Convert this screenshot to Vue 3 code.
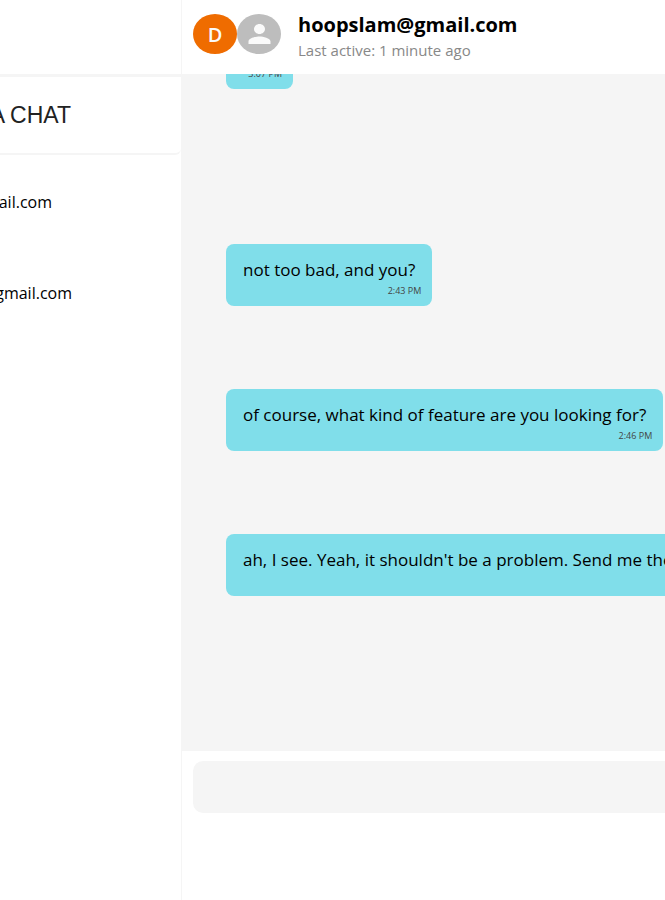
<script setup>
const contacts = [
  { name: 'gmail.com', short: true },
  { name: 'gmail.com', short: false },
]
const messages = [
  { text: 'not too bad, and you?', time: '2:43 PM' },
  { text: 'of course, what kind of feature are you looking for?', time: '2:46 PM' },
  { text: "ah, I see. Yeah, it shouldn't be a problem. Send me the", time: '', wide: true },
]
</script>

<template>
  <div class="app">
    <aside class="sidebar">
      <div class="topbar"></div>
      <h2 class="heading">A CHAT</h2>
      <ul class="contacts">
        <li v-for="(c, i) in contacts" :key="i" :class="{ short: c.short }">{{ c.name }}</li>
      </ul>
    </aside>
    <main class="chat">
      <header class="header">
        <div class="avatars">
          <span class="avatar orange">D</span>
          <span class="avatar">
            <svg viewBox="0 0 24 24" width="33" height="30" preserveAspectRatio="none" aria-hidden="true">
              <path fill="#fafafa" d="M12 12c2.21 0 4-1.79 4-4s-1.79-4-4-4-4 1.79-4 4 1.79 4 4 4zm0 2c-2.67 0-8 1.34-8 4v2h16v-2c0-2.66-5.33-4-8-4z" />
            </svg>
          </span>
        </div>
        <div>
          <h1 class="title">hoopslam@gmail.com</h1>
          <p class="status">Last active: 1 minute ago</p>
        </div>
      </header>
      <section class="messages">
        <div class="bubble clipped"><span class="time">3:07 PM</span></div>
        <div v-for="m in messages" :key="m.text" class="bubble" :class="{ wide: m.wide }">
          <p class="text">{{ m.text }}</p>
          <span class="time">{{ m.time }}</span>
        </div>
      </section>
      <form class="composer" @submit.prevent>
        <input type="text" class="field" aria-label="Message" />
      </form>
    </main>
  </div>
</template>

<style>
body {
  margin: 0;
  background: #fff;
}
</style>

<style scoped>
.app {
  display: flex;
  min-height: 100vh;
  overflow: hidden;
  font-family: "Open Sans", "Noto Sans", sans-serif;
  font-size: 16px;
  color: #000;
}
.sidebar {
  flex: 0 0 181px;
  overflow: hidden;
  border-right: 1px solid #f5f5f5;
}
.topbar {
  height: 74px;
  border-bottom: 3px solid #f5f5f5;
}
.heading {
  display: flex;
  justify-content: flex-end;
  align-items: center;
  height: 76px;
  margin: 0;
  padding-right: 110px;
  border-bottom: 2px solid #f5f5f5;
  border-radius: 0 6px 6px 0;
  font: 400 23px/32px "Liberation Sans", sans-serif;
  color: #222;
  white-space: nowrap;
}
.contacts {
  margin: 0;
  padding: 35px 0 0;
  list-style: none;
}
.contacts li {
  display: flex;
  justify-content: flex-end;
  padding-right: 109px;
  margin-bottom: 67px;
  line-height: 24px;
}
.contacts .short {
  padding-right: 129px;
}
.chat {
  flex: 1;
  min-width: 0;
  display: flex;
  flex-direction: column;
}
.header {
  display: flex;
  align-items: center;
  gap: 17px;
  height: 74px;
  padding: 0 11px 2px;
  box-sizing: border-box;
}
.avatars {
  display: flex;
  margin-bottom: 4px;
}
.avatar {
  display: flex;
  align-items: center;
  justify-content: center;
  width: 44px;
  height: 40px;
  border-radius: 50%;
  background: #bdbdbd;
  color: #fafafa;
  font-size: 20px;
  font-weight: 600;
}
.orange {
  background: #ef6c00;
}
.title {
  margin: 0;
  font-size: 20px;
  line-height: 28px;
  font-weight: 700;
}
.status {
  margin: 0;
  font-size: 15px;
  line-height: 22px;
  color: #888;
}
.messages {
  flex: 1;
  display: flex;
  flex-direction: column;
  align-items: flex-start;
  gap: 83px;
  padding-left: 44px;
  overflow: hidden;
  background: #f5f5f5;
}
.bubble {
  display: flex;
  flex-direction: column;
  box-sizing: border-box;
  min-height: 62px;
  padding: 13px 11px 8px 17px;
  border-radius: 8px;
  background: #80deea;
  white-space: nowrap;
}
.text {
  margin: 0;
  padding-right: 6px;
  font-size: 17px;
  line-height: 26px;
}
.time {
  align-self: flex-end;
  font-size: 9px;
  line-height: 15px;
  color: #444;
}
.clipped {
  justify-content: flex-end;
  width: 67px;
  margin: -47px 0 72px;
}
.wide {
  align-self: stretch;
  border-radius: 8px 0 0 8px;
}
.composer {
  padding: 10px 0 87px 11px;
}
.field {
  display: block;
  box-sizing: border-box;
  width: 100%;
  height: 52px;
  padding: 0 16px;
  border: 0;
  border-radius: 10px 0 0 10px;
  outline: none;
  background: #f5f5f5;
  font: inherit;
}
</style>
